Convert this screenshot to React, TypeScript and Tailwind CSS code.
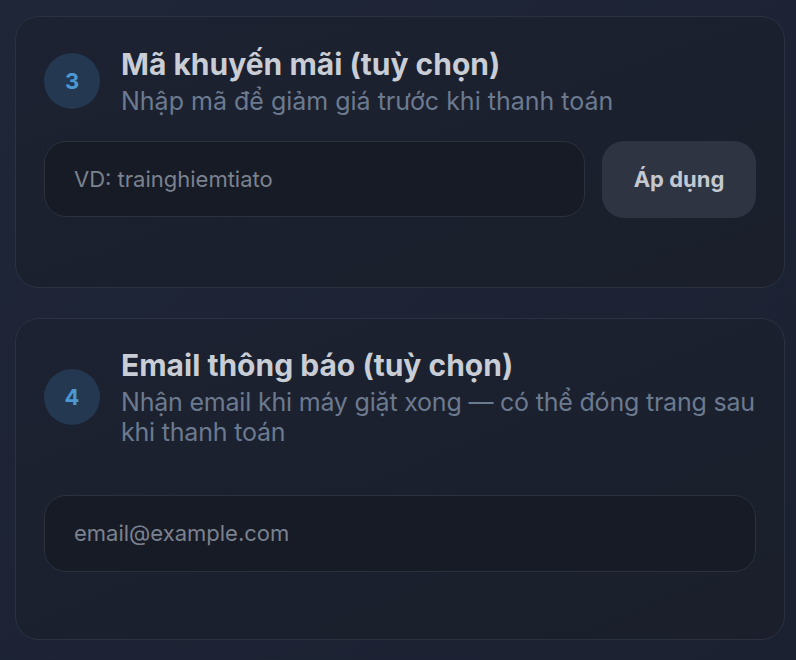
import React from "react";

function Badge({ n }: { n: string }) {
  return (
    <div className="flex h-[56px] w-[56px] shrink-0 items-center justify-center rounded-full bg-[#243851] text-[22px] font-bold text-[#4b98d2]">
      {n}
    </div>
  );
}

export default function App() {
  return (
    <div
      className="min-h-[660px] w-full bg-gradient-to-br from-[#1f2638] to-[#1b2131] pt-[16px] pl-[15px] pr-[11px] pb-[20px]"
      style={{ fontFamily: "Inter, 'Noto Sans', sans-serif" }}
    >
      <div className="flex flex-col gap-[30px]">
        <div className="rounded-[24px] border border-[#2a3141] bg-gradient-to-br from-[#1c2231] to-[#1a1f2b] px-[28px] pt-[29px] pb-[69px]">
          <div className="mb-[25px] flex items-center gap-[21px]">
            <Badge n="3" />
            <div className="flex flex-col">
              <div className="text-[30px] font-bold leading-[36px] text-[#c9cdd5]">
                Mã khuyến mãi (tuỳ chọn)
              </div>
              <div className="mt-[4px] text-[25px] leading-[30px] text-[#6c7a90]">
                Nhập mã để giảm giá trước khi thanh toán
              </div>
            </div>
          </div>
          <div className="flex gap-[17px]">
            <div className="flex h-[76px] flex-1 items-center rounded-[22px] border border-[#2b313d] bg-[#171b26] px-[29px] text-[22px] text-[#7b828f]">
              VD: trainghiemtiato
            </div>
            <button className="flex h-[77px] w-[154px] items-center justify-center rounded-[22px] bg-[#2e3441] text-[22px] font-bold text-[#c4c8d0]">
              Áp dụng
            </button>
          </div>
        </div>

        <div className="rounded-[24px] border border-[#2a3141] bg-gradient-to-br from-[#1c2231] to-[#1a1f2b] px-[28px] pt-[28px] pb-[67px]">
          <div className="mb-[48px] flex items-center gap-[21px]">
            <Badge n="4" />
            <div className="mr-[-14px] flex flex-col">
              <div className="text-[30px] font-bold leading-[36px] text-[#c9cdd5]">
                Email thông báo (tuỳ chọn)
              </div>
              <div className="mt-[4px] text-[25px] leading-[30px] tracking-[-0.2px] text-[#6c7a90]">
                Nhận email khi máy giặt xong — có thể đóng trang sau khi thanh toán
              </div>
            </div>
          </div>
          <div className="flex h-[77px] items-center rounded-[22px] border border-[#2b313d] bg-[#171b26] px-[29px] text-[22px] text-[#7b828f]">
            email@example.com
          </div>
        </div>
      </div>
    </div>
  );
}
